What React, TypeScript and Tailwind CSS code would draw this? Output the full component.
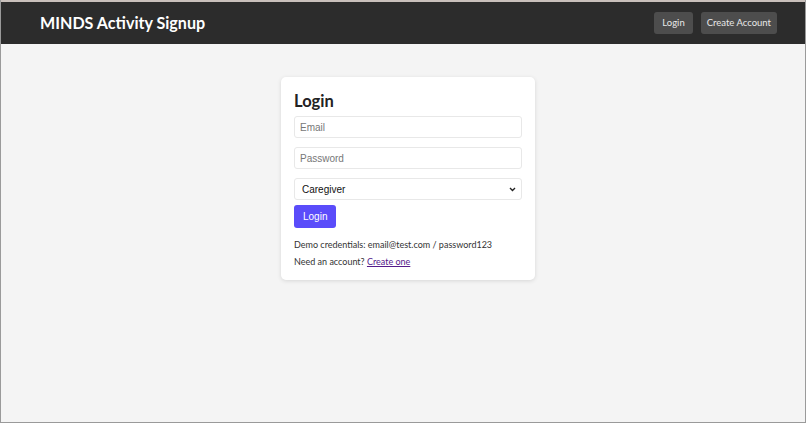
export default function App() {
  return (
    <div
      className="min-h-[423px] flex flex-col bg-[#f4f4f4] border-x border-b border-[#9a9a9a]"
      style={{ fontFamily: 'Lato, "Noto Sans", sans-serif' }}
    >
      <header className="h-[44px] flex items-center justify-between pl-[39px] pr-[28px] bg-[#2c2c2c] border-t-2 border-[#c9c0bb]">
        <h1 className="text-[16.1px] font-bold text-white">MINDS Activity Signup</h1>
        <nav className="flex items-center gap-[8px]">
          <button className="h-[22px] px-[8px] rounded-[3px] bg-[#4d4d4d] text-[9.5px] text-[#e8e8e8]">
            Login
          </button>
          <button className="h-[22px] px-[6px] rounded-[3px] bg-[#4d4d4d] text-[9.5px] text-[#e8e8e8]">
            Create Account
          </button>
        </nav>
      </header>
      <main className="flex justify-center pt-[33px] pl-[10px]">
        <div className="w-[254px] bg-white rounded-[5px] shadow-[0_1px_4px_rgba(0,0,0,0.12)] px-[13px] pt-[13px] pb-[11px]">
          <h2 className="text-[16.5px] font-bold text-[#222] leading-[22px] mb-[4px]">
            Login
          </h2>
          <div
            className="flex flex-col gap-[9px]"
            style={{ fontFamily: '"Liberation Sans", Arial, sans-serif' }}
          >
            <input
              placeholder="Email"
              className="h-[22px] w-full border border-[#e8e8e8] rounded-[3px] px-[5px] text-[10px] placeholder:text-[#777] outline-none"
            />
            <input
              placeholder="Password"
              type="password"
              className="h-[22px] w-full border border-[#e8e8e8] rounded-[3px] px-[5px] text-[10px] placeholder:text-[#777] outline-none"
            />
            <div className="relative h-[22px] w-full border border-[#e8e8e8] rounded-[3px] flex items-center px-[7px] text-[10px] text-[#111]">
              Caregiver
              <svg
                className="absolute right-[5px] top-[8px]"
                width="7"
                height="5"
                viewBox="0 0 7 5"
              >
                <path d="M1 1l2.5 2.5L6 1" stroke="#222" strokeWidth="1.4" fill="none" />
              </svg>
            </div>
          </div>
          <button
            className="mt-[5px] h-[23px] px-[9px] rounded-[3px] bg-[#5a4cfa] text-white text-[10px]"
            style={{ fontFamily: '"Liberation Sans", Arial, sans-serif' }}
          >
            Login
          </button>
          <p className="mt-[10px] text-[9px] leading-[14px] text-[#333] whitespace-nowrap">
            Demo credentials: email@test.com / password123
          </p>
          <p className="mt-[3px] text-[9px] leading-[14px] text-[#333]">
            Need an account?{' '}
            <a href="#" className="text-[#551a8b] underline">
              Create one
            </a>
          </p>
        </div>
      </main>
    </div>
  );
}
